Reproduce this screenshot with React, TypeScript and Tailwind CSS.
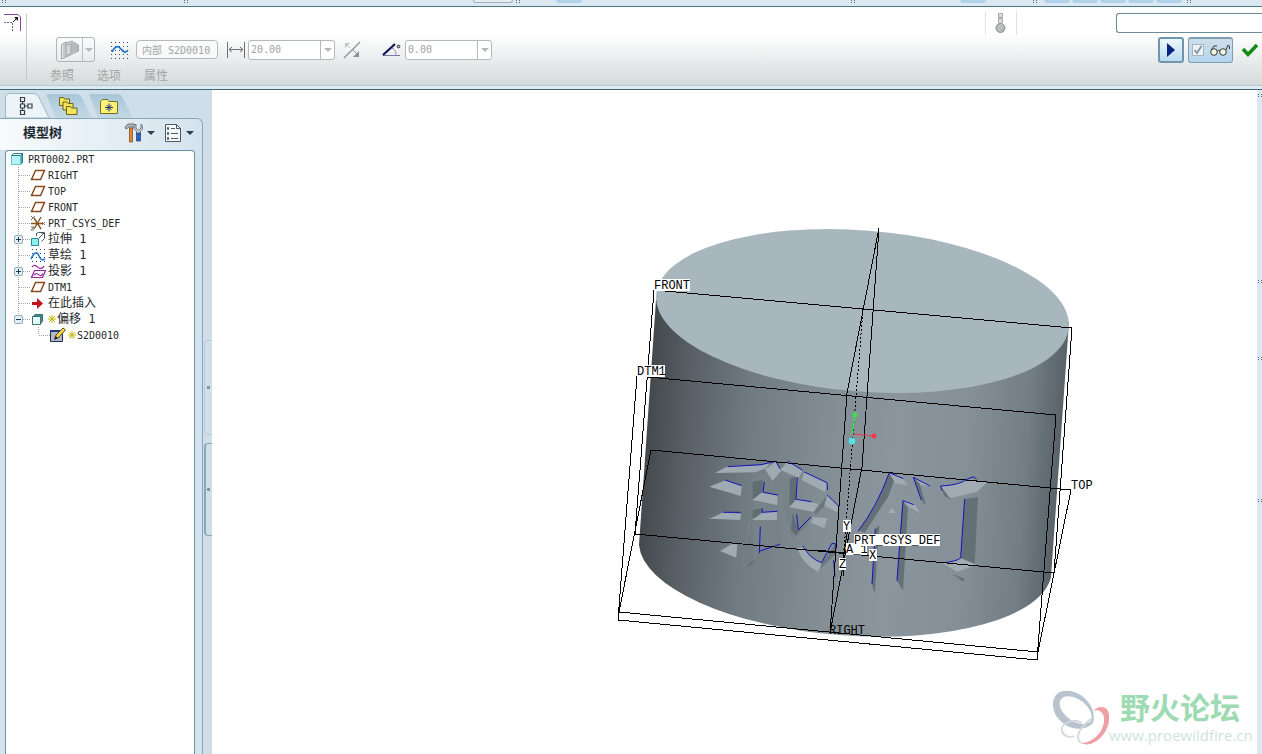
import { useState } from 'react';
import type { ReactNode } from 'react';

type IconName = 'part' | 'plane' | 'csys' | 'extrude' | 'sketch' | 'project' | 'insert' | 'offset' | 'section';

interface TreeNode {
  label: string;
  icon: IconName;
  depth: number;
  branch?: 'plus' | 'minus';
  last?: boolean;
  pending?: boolean;
}

const nodes: TreeNode[] = [
  { label: 'PRT0002.PRT', icon: 'part', depth: 0 },
  { label: 'RIGHT', icon: 'plane', depth: 1 },
  { label: 'TOP', icon: 'plane', depth: 1 },
  { label: 'FRONT', icon: 'plane', depth: 1 },
  { label: 'PRT_CSYS_DEF', icon: 'csys', depth: 1 },
  { label: '拉伸 1', icon: 'extrude', depth: 1, branch: 'plus' },
  { label: '草绘 1', icon: 'sketch', depth: 1 },
  { label: '投影 1', icon: 'project', depth: 1, branch: 'plus' },
  { label: 'DTM1', icon: 'plane', depth: 1 },
  { label: '在此插入', icon: 'insert', depth: 1 },
  { label: '偏移 1', icon: 'offset', depth: 1, branch: 'minus', last: true, pending: true },
  { label: 'S2D0010', icon: 'section', depth: 2, last: true, pending: true },
];

const icons: Record<IconName, ReactNode> = {
  part: (
    <g stroke="#2f7f87">
      <path d="M1.500 4.500L3.500 2.500h9v9l-2 2h-9z" fill="#3fa3ac" />
      <path d="M1.500 4.500h9v9h-9z" fill="#b4f3f6" stroke="#6cc4ca" />
      <path d="M1.500 4.500L3.500 2.500h9l-2 2z" fill="#e2ffff" />
    </g>
  ),
  plane: <path d="M5.500 3.500h9l-4 9h-9z" fill="#fff" stroke="#8a4a1c" strokeWidth="1.500" />,
  csys: (
    <g fill="none" stroke="#8a5220" strokeWidth="1.400">
      <path d="M1 8.500h12M4 3l7 11M11 2L4 14" />
      <path d="M1 1l2 2 2-2M3 3L1 5M12 7l3 3M15 7l-3 3M1 12h3l-3 3h3" stroke="#777" strokeWidth="1" />
    </g>
  ),
  extrude: (
    <g fill="none" stroke="#47585c">
      <path d="M1.500 7.500h7v7h-7z" fill="#8df0f0" stroke="#2b8a94" />
      <path d="M6.500 5V2.500l2-1h6v6l-3 3M9 7l5-5M11 2h3.500V6" />
    </g>
  ),
  sketch: (
    <g>
      <path d="M2 2.500h13M2 6.500h13M2 10.500h13M2 14.500h13" stroke="#26427c" strokeDasharray="1 3" />
      <path d="M1 12c3-7 6-8 8-3s4 4 6 3" fill="none" stroke="#1c78c8" strokeWidth="1.500" />
    </g>
  ),
  project: (
    <g fill="none" stroke="#93269d" strokeWidth="1.200">
      <path d="M2 4c3-4 5 0 7 1s4 0 5-2" />
      <path d="M4.500 7.500h11l-3 7h-11z" />
      <path d="M4 12.500c2-4 4-1 6 0s2-1 3-2" />
    </g>
  ),
  insert: <path d="M2 7h5V3l6 5.500L7 14v-4H2z" fill="#c8101c" />,
  offset: (
    <g stroke="#3d7774">
      <path d="M2.500 6L5 3.500h7.500v7L10 13.500z" fill="#388e86" />
      <path d="M2.500 5.500h8v8h-8z" fill="#e9fbf9" />
    </g>
  ),
  section: (
    <g>
      <path d="M.5 3.500h12v11H.5z" fill="#b4b8c4" stroke="#22305e" />
      <path d="M0 3h13v2H0z" fill="#1f3680" />
      <path d="M5 12l1-4 7-7 2.500 2L8 11z" fill="#f5d84c" stroke="#5a4610" />
      <path d="M4 13l1.500-4 2.500 2z" fill="#222" />
    </g>
  ),
};

const Glyph = ({ name }: { name: IconName }) => (
  <svg className="h-4 w-4 shrink-0" viewBox="0 0 16 16" aria-hidden="true">
    {icons[name]}
  </svg>
);

const Caret = ({ className = 'fill-[#2c3f4c]' }: { className?: string }) => (
  <svg className={`h-1 w-2 shrink-0 ${className}`} viewBox="0 0 8 4" aria-hidden="true">
    <path d="M0 0h8L4 4z" />
  </svg>
);

const Grip = () => (
  <svg className="h-1.5 w-1.5 shrink-0" viewBox="0 0 6 6" aria-hidden="true">
    <path d="M1 .5h4M1 2.500h4" stroke="#49718a" strokeDasharray="1 2" />
  </svg>
);

const TopStrip = () => (
  <div className="flex h-[7px] shrink-0 items-start overflow-hidden border-b border-[#4b7684] bg-[#dbe8f1]">
    <div className="flex w-[183px] pl-px"><Grip /></div>
    <div className="w-[290px]"><Grip /></div>
    <div className="h-[3px] w-10 rounded-b border border-t-0 border-[#9fb2bc] bg-[#e6eef2]"></div>
    <div className="w-[43px] pl-0.5"><Grip /></div>
    <div className="h-[3px] w-[26px] rounded-b bg-[#b1d2ea]"></div>
    <div className="flex flex-1 justify-end pr-[104px]"><Grip /></div>
    <div className="h-[3px] w-[26px] rounded-b bg-[#b1d2ea]"></div>
    <div className="flex w-[58px] justify-end pr-1.5"><Grip /></div>
    <div className="flex gap-0.5">
      {[0, 1, 2, 3, 4].map((i) => (
        <div key={i} className="h-[3px] w-[26px] rounded-b bg-[#b1d2ea]"></div>
      ))}
    </div>
    <div className="w-20 pl-1"><Grip /></div>
  </div>
);

interface ComboProps {
  label: string;
  value: string;
}

const Combo = ({ label, value }: ComboProps) => (
  <div className="flex h-5 w-[87px] overflow-hidden rounded-[3px] border border-[#b4babc] bg-white">
    <input aria-label={label} readOnly defaultValue={value} className="w-[71px] min-w-0 bg-transparent px-0.5 text-[10px] text-[#a0a4a6] outline-none" />
    <button aria-label={`${label} ▾`} className="flex flex-1 items-center justify-center border-l border-[#b4babc]">
      <Caret className="fill-[#b3b8ba]" />
    </button>
  </div>
);

const Dashboard = () => {
  const [preview, setPreview] = useState(true);

  return (
    <div className="flex h-[79px] shrink-0 border-b border-[#b3ccd5] bg-linear-to-b from-white from-35% to-[#d5dadb]">
      <div className="flex w-[27px] shrink-0 pt-[7px]">
        <svg className="h-[18px] w-[22px]" viewBox="0 0 22 18" fill="none" aria-label="offset">
          <path d="M4 .5h14l2.500 2.500V17" stroke="#8646a0" />
          <path d="M4 8.500h9M12.500 9v9" stroke="#8a5a9c" strokeDasharray="2 1" />
          <path d="M13 8l5-5" stroke="#111" />
          <path d="M14 3h4v4z" fill="#111" />
        </svg>
        <div className="ml-auto h-[66px] w-px bg-[#c3c9cb]"></div>
      </div>

      <div className="flex min-w-0 flex-1 flex-col">
        <div className="flex h-[30px] justify-end">
          <div className="mt-1 flex h-6 w-8 justify-center border-x border-[#dfe2e3]">
            <svg className="h-6 w-3" viewBox="0 0 12 24" aria-label="status">
              <path d="M3.500 2.500h4v4h-4zM3.500 7.500h4v4h-4z" fill="#ddd" stroke="#a5a8a9" />
              <path d="M3.500 11h4v4h-4z" fill="#ccc" />
              <circle cx="5.500" cy="17" r="4.500" fill="#b2b4b5" stroke="#8f9293" />
              <path d="M3 17l4-4M3 20l5-5" stroke="#d8d8d8" />
            </svg>
          </div>
          <input aria-label="message" className="mt-1.5 ml-[99px] h-5 w-[146px] rounded-l-[3px] border border-r-0 border-[#6d8b99] bg-white px-1 text-[10px] outline-none" />
        </div>

        <div className="flex h-[25px] items-center">
          <div className="ml-[29px] flex h-[25px] w-[39px] rounded-[3px] border border-[#b0b6b8]">
            <button aria-label="type" className="flex flex-1 items-center justify-center">
              <svg className="h-5 w-5" viewBox="0 0 20 20" fill="none" stroke="#a3a7a9" aria-hidden="true">
                <path d="M1.500 4.500L6 2v15l-4.500 2z" fill="#e7e9ea" />
                <path d="M6 3l6-2 6.500 4v6L12 14l-6 3z" fill="#d3d6d8" />
                <path d="M11 2l7 3v6l-7 2z" fill="#b5b9bb" stroke="none" />
                <path d="M6 5l5-1v10l-5 1M4 4v13" />
              </svg>
            </button>
            <button aria-label="type list" className="flex w-3 items-center justify-center border-l border-[#b9bfc1]">
              <Caret className="w-1.5 fill-[#b3b8ba]" />
            </button>
          </div>
          <svg className="ml-4 h-[18px] w-[18px]" viewBox="0 0 18 18" aria-hidden="true">
            <path d="M0 1.500h18M0 5.500h18M0 9.500h18M0 13.500h18M0 17.500h18" stroke="#354a80" strokeDasharray="1 3" />
            <path d="M1 11c3-6 6-7 9-3s5 4 7 1" fill="none" stroke="#1c74c4" strokeWidth="1.600" />
          </svg>
          <input aria-label="草绘" readOnly defaultValue="内部 S2D0010" className="ml-[7px] h-[19px] w-[82px] rounded border border-[#b4babc] bg-white/60 px-[5px] text-[10px] text-[#a0a4a6] outline-none" />
          <svg className="ml-[9px] h-4 w-[18px]" viewBox="0 0 18 16" stroke="#6c7072" fill="none" aria-hidden="true">
            <path d="M.5 0v16M17.500 0v16M2 7.500h14M5 5L2 7.500 5 10M13 5l3 2.500L13 10" />
          </svg>
          <div className="ml-[3px]"><Combo label="深度" value="20.00" /></div>
          <button aria-label="flip" className="ml-2">
            <svg className="h-[18px] w-[18px]" viewBox="0 0 18 18" stroke="#8d9193" fill="none">
              <path d="M1 17L17 1" strokeWidth="1.300" />
              <path d="M7 7L4 4" stroke="#c0c3c4" />
              <path d="M2 2h5L2 7z" fill="#c0c3c4" stroke="none" />
              <path d="M10 9l5 5" />
              <path d="M16 16h-6l6-6z" fill="#8d9193" stroke="none" />
            </svg>
          </button>
          <svg className="ml-5 h-4 w-5" viewBox="0 0 20 16" fill="none" aria-hidden="true">
            <path d="M2 13.500h17" stroke="#7779a5" />
            <path d="M2 13L14 2" stroke="#0c1250" strokeWidth="2.200" />
            <path d="M11 6c3 1 4 4 4 7" stroke="#7779a5" strokeDasharray="2 1" />
            <circle cx="17.500" cy="4.500" r="1.300" stroke="#111" />
          </svg>
          <div className="ml-1"><Combo label="角度" value="0.00" /></div>

          <div className="ml-auto flex items-center gap-1">
            <button aria-label="resume" className="flex h-[26px] w-[26px] items-center justify-center rounded-[3px] border-2 border-[#6f95a9] bg-linear-to-b from-[#eef7fc] to-[#b9dcf2]">
              <svg className="h-3.5 w-2" viewBox="0 0 8 14" aria-hidden="true"><path d="M0 0l8 7-8 7z" fill="#0a2280" /></svg>
            </button>
            <div className="flex h-[26px] w-[45px] items-center gap-1.5 rounded-[3px] border border-t-2 border-[#809db0] bg-linear-to-b from-[#cfdfea] to-[#b3d5ef] px-[3px]">
              <label className="relative flex h-3 w-3 shrink-0 items-center justify-center border border-[#a3b3bd] bg-[#f0f3f5]">
                <input type="checkbox" aria-label="preview" checked={preview} onChange={() => setPreview(!preview)} className="peer absolute inset-0 appearance-none" />
                <svg className="hidden h-2.5 w-2.5 peer-checked:block" viewBox="0 0 10 10" fill="none" stroke="#8690a0" strokeWidth="1.800" aria-hidden="true">
                  <path d="M1.500 5L4 8l4.500-7" />
                </svg>
              </label>
              <svg className="h-3 w-5 shrink-0" viewBox="0 0 20 12" stroke="#333b32" fill="#f4f5e6" aria-hidden="true">
                <circle cx="4" cy="8" r="3.300" />
                <circle cx="13" cy="8" r="3.300" />
                <path d="M7.300 7c1-1 2-1 2.500 0M1 6l3-4h3M16 6l2-5 1.500 1v3" fill="none" />
              </svg>
            </div>
            <button aria-label="apply" className="mr-[3px] ml-1">
              <svg className="h-4 w-[18px]" viewBox="0 0 18 16" fill="none" aria-hidden="true">
                <path d="M2 7l5 5.500L16 3" stroke="#128a16" strokeWidth="3.500" />
              </svg>
            </button>
          </div>
        </div>

        <div className="flex gap-[23px] pt-1.5 pl-[23px] text-xs text-[#a1a5a7]">
          <button>参照</button>
          <button>选项</button>
          <button>属性</button>
        </div>
      </div>
    </div>
  );
};

const NavTabs = () => (
  <div className="relative h-7 shrink-0">
    <svg className="absolute inset-0 h-7 w-[212px]" viewBox="0 0 212 28" aria-hidden="true">
      <defs>
        <linearGradient id="tab" x1="0" y1="0" x2="0" y2="1">
          <stop offset="0" stopColor="#a9c7d8" />
          <stop offset="1" stopColor="#c3d8e4" />
        </linearGradient>
      </defs>
      <path d="M89 4h28q5 0 7 6l9 18H98z" fill="url(#tab)" />
      <path d="M46 4h30q5 0 7 6l9 18H56z" fill="url(#tab)" />
      <path d="M5.500 28V7q0-3.500 3.500-3.500h24q5 0 7.500 7L49 28z" fill="#edf4f8" stroke="#9db8c6" />
    </svg>
    <div className="relative flex h-7 items-center pt-1 pl-[18px]">
      <button aria-label="模型树" className="w-[18px]">
        <svg className="h-5 w-[18px]" viewBox="0 0 18 20" fill="none" stroke="#333e49" strokeWidth="1.200">
          <path d="M2.500 1.500h4v4h-4zM2.500 8h4v4h-4zM2.500 14.500h4v4h-4zM10 8h4v4h-4zM4.500 5.500V8M4.500 12v2.500M6.500 10H10" />
        </svg>
      </button>
      <button aria-label="文件夹浏览器" className="ml-[22px] w-5">
        <svg className="h-5 w-5" viewBox="0 0 20 20" fill="#f4e45b" stroke="#6d631d">
          <path d="M1.500 9.500v-8h4l1 1.500h5v6.500z" />
          <path d="M5 14V6h4l1 1.500h5V14z" />
          <path d="M8.500 18.500v-8h4l1 1.500h5.500v6.500z" />
        </svg>
      </button>
      <button aria-label="收藏夹" className="ml-[22px] w-[18px]">
        <svg className="h-4 w-[18px]" viewBox="0 0 18 16">
          <path d="M.5 15.500v-12l2-2h5l1.500 2h8.500v12z" fill="#fbf17b" stroke="#75701f" />
          <path d="M9 5.500v8M5 9.500h8M6.500 7l5 5M11.500 7l-5 5" stroke="#26366e" />
        </svg>
      </button>
    </div>
  </div>
);

const TreeRow = ({ node }: { node: TreeNode }) => {
  const hasCjk = /[\u4e00-\u9fff]/.test(node.label);

  return (
    <li className="flex h-4 items-center">
      {node.depth === 2 && <span className="w-5 shrink-0"></span>}
      {node.depth > 0 && (
        <span className="relative h-4 w-6 shrink-0">
          <svg className="h-4 w-6" viewBox="0 0 24 16" stroke="#a2a2a2" strokeDasharray="1 1" aria-hidden="true">
            <path d={node.last ? 'M12.500 0v8' : 'M12.500 0v16'} />
            <path d="M13 8.500h11" />
          </svg>
          {node.branch && (
            <button aria-label={node.branch} className="absolute top-1 left-2 flex h-[9px] w-[9px] items-center justify-center rounded-xs border border-[#91acb9] bg-[#e4eff5]">
              <svg className="h-[5px] w-[5px]" viewBox="0 0 5 5" stroke="#1d3b4c">
                <path d={node.branch === 'plus' ? 'M0 2.500h5M2.500 0v5' : 'M0 2.500h5'} />
              </svg>
            </button>
          )}
        </span>
      )}
      {node.depth === 0 && <span className="w-1 shrink-0"></span>}
      <Glyph name={node.icon} />
      {node.pending && (
        <svg className="ml-0.5 h-2 w-2 shrink-0" viewBox="0 0 8 8" stroke="#c2b80c" aria-hidden="true">
          <path d="M4 0v8M0 4h8M1 1l6 6M7 1L1 7" />
        </svg>
      )}
      <span className={`whitespace-pre text-[#26292b] ${node.pending ? 'ml-px' : 'ml-0.5'} ${hasCjk ? 'text-xs leading-4' : 'pt-px text-[10px] leading-4'}`}>{node.label}</span>
    </li>
  );
};

const Navigator = () => (
  <aside className="flex w-[212px] shrink-0 flex-col bg-[#cfdfea]">
    <NavTabs />
    <div className="flex flex-1">
      <div className="flex w-[203px] flex-col rounded-tr-md border-t border-r border-[#8aa7b5] bg-[#d3e3ed]">
        <div className="flex h-[31px] items-center rounded-tr-md bg-linear-to-r from-[#f8fbfd] to-[#d3e3ed] pb-1 pl-[23px]">
          <h2 className="text-[13px] font-bold text-[#1d2830]">模型树</h2>
          <button aria-label="设置" className="ml-[62px] flex items-center gap-1">
            <svg className="h-5 w-[19px]" viewBox="0 0 19 20" aria-hidden="true">
              <path d="M1 4l3-3h6l2 3-2 1-1-1H5L2 6z" fill="#b9bec2" stroke="#3d4549" strokeWidth=".7" />
              <path d="M5.500 5h3v14h-3z" fill="#e1862d" stroke="#74421a" strokeWidth=".7" />
              <path d="M12 1v4l2 2h1l2-2V1l1.500 2v3L16.500 8v3h-4V8L10 6V3z" fill="#c7ced3" stroke="#4d5960" strokeWidth=".7" />
              <path d="M12.500 10h4v8h-4z" fill="#2e66ba" stroke="#1d3b74" strokeWidth=".7" />
            </svg>
            <Caret />
          </button>
          <button aria-label="显示" className="ml-2.5 flex items-center gap-1">
            <svg className="h-5 w-[17px]" viewBox="0 0 17 20" fill="none" stroke="#4c5b64" aria-hidden="true">
              <path d="M.5 1.500h11l4 4v13H.5z" fill="#f5f8fa" />
              <path d="M11.500 1.500v4h4" />
              <path d="M6 5.500h4M6 10.500h7M6 15.500h7" />
              <path d="M2.500 4.500h1v2h-1zM2.500 9.500h1v2h-1zM2.500 14.500h1v2h-1z" />
            </svg>
            <Caret />
          </button>
        </div>
        <ul className="mr-[7px] ml-[5px] flex-1 rounded-t border border-b-0 border-[#6b909f] bg-white">
          {nodes.map((node) => (
            <TreeRow key={node.label} node={node} />
          ))}
        </ul>
      </div>
      <div className="flex flex-1 flex-col pt-[222px] pl-px">
        <div className="flex h-[95px] items-center justify-center rounded-l border border-r-0 border-[#b9cdd9]">
          <span className="h-[3px] w-[3px] rounded-full border border-[#334b59]"></span>
        </div>
        <div className="mt-2 flex h-[93px] items-center justify-center rounded-l border border-r-0 border-l-2 border-[#8ea6b4] pr-0.5">
          <span className="h-[3px] w-[3px] rounded-full border border-[#334b59]"></span>
        </div>
      </div>
    </div>
  </aside>
);

/* Carved strokes of the first character: light floors, dark walls, blue sketch edges */
const CarvedLeft = () => (
  <g transform="translate(600 430) scale(.3333)">
    <path d="M455 150l30-25 55 15-5 60-75 10zM457 215l75 8v38l-75 5zM457 270h75l10 80-60 20-45 42-10-5 20-140zM535 150l35-10v90l70 10-20 50-45 35zM455 155v110l-30 125 15 20 20-15V155z" fill="#788289" />
    <path d="M570 145l18-5v75l-20 12zM573 300l5-55 15 55 35-35-40 52zM437 412l25-22-5 14zM458 155l30-5v38l-30 22zM458 240l28-5v18l-28 12z" fill="#626c73" />
    <g fill="#9faab2">
      <path d="M345 129l38-20 105-4 27-10-18 20-30 12z" />
      <path d="M495 118l32-23 16 28-25 30z" />
      <path d="M541 120l24-27 43 28-12 22z" />
      <path d="M605 150l8-24 70 32-8 28z" />
      <path d="M328 170l50-20 48 17-4 31z" />
      <path d="M457 210l30-24 45 11v28z" />
      <path d="M568 232l22-26 66 16-14 24z" />
      <path d="M328 266l43-19 52 4-2 19z" />
      <path d="M457 270l32-24h42v24z" />
      <path d="M670 225l12-30 36 35-5 18z" />
      <path d="M632 278l8-17 42 4-9 30z" />
      <path d="M360 363l36-22 16 2-3 40z" />
      <path d="M592 355l20-5 20 30 33 18-10 28q-48-24-63-71z" />
    </g>
    <path d="M642 246l40-51-10 35-25 24zM665 398l43-58v30l-45 45z" fill="#6c767d" />
    <g fill="none" stroke="#1414b8" strokeWidth="3">
      <path d="M383 110l100-6 45-10 12 22" />
      <path d="M563 93l45 28M613 126l68 32 2 22M375 150l50 17M493 155l-4 32 45 8M592 142l-4 66 46 7M370 247h52M487 235v12l45-3M682 195l36 35M590 253l5 46 38-38M481 290l-3 80M480 363l60-20M609 348q20 38 56 50l30-57h12v28M701 390l4 52" />
    </g>
  </g>
);

/* Second character */
const CarvedRight = () => (
  <g transform="translate(840 430) scale(.3333)">
    <g fill="#656f76">
      <path d="M148 128l14 24-18 48-70 108-18-8 50-72z" />
      <path d="M220 142l18 16 19 66-8-6z" />
      <path d="M187 213l17 20-15 250-18-32z" />
      <path d="M106 298l12-12-14 206-8-30z" />
      <path d="M374 207l40-6-10 206-42-20z" />
      <path d="M300 168l22 10 12 32-20-12zM338 432l35 14-2 10z" />
    </g>
    <g fill="#a0abb3">
      <path d="M150 132l40 14 12 20-36-6z" />
      <path d="M222 142l50 26-28-2z" />
      <path d="M190 212l32 8 19 30-35-20z" />
      <path d="M302 168q50-2 88-20l50 10-30 28-80 19z" />
      <path d="M302 397q48 2 60-13l48 20-58 22zM155 233l13 16h-24z" />
    </g>
    <g fill="none" stroke="#1414b8" strokeWidth="3">
      <path d="M54 304q58-76 94-176l42 18M106 296l-10 166M222 224l-33-12-18 240M244 210l-24-68 50 26M306 182l-4-14q54-2 78-20l22-8 8 8M374 207l-12 177q-12 10-50 14" />
    </g>
  </g>
);

interface LabelProps {
  x: number;
  y: number;
  text: string;
  width: number;
}

const PlaneLabel = ({ x, y, text, width }: LabelProps) => (
  <g>
    <rect x={x} y={y - 10} width={width} height="12" fill="#fff" />
    <text x={x} y={y} fontSize="12" fill="#000">{text}</text>
  </g>
);

const Viewport = () => (
  <main className="min-w-0 flex-1 bg-white">
    <svg className="block h-full w-full" viewBox="212 90 1045 664" preserveAspectRatio="xMinYMin meet" fontFamily='"Liberation Mono", monospace'>
      <defs>
        <linearGradient id="body" gradientUnits="userSpaceOnUse" x1="677" y1="0" x2="1091" y2="0" gradientTransform="skewX(-4)">
          <stop offset="0" stopColor="#44494d" />
          <stop offset=".1" stopColor="#596167" />
          <stop offset=".25" stopColor="#717b82" />
          <stop offset=".45" stopColor="#838e95" />
          <stop offset=".6" stopColor="#8a959d" />
          <stop offset=".78" stopColor="#848f97" />
          <stop offset=".92" stopColor="#727d84" />
          <stop offset="1" stopColor="#596369" />
        </linearGradient>
      </defs>

      <path d="M656 300L639 545A207 79 4.500 0 0 1051 577L1069 322z" fill="url(#body)" />
      <ellipse cx="862.500" cy="311" rx="207" ry="80.600" transform="rotate(4.500 862.500 311)" fill="#a8b6be" />
      <CarvedLeft />
      <CarvedRight />

      <g fill="none" stroke="#000" shapeRendering="crispEdges">
        <path d="M654 290L1072 328L1054 573L635 534z" />
        <path d="M637 376L1056 415L1037 660L618 620z" />
        <path d="M651 450L1071 490L1038 652L619 612z" />
        <path d="M879 228L847 393L830 633L862 467z" />
        <path d="M863 309L843 562" strokeDasharray="2 2" />
        <path d="M816 550L873 556M844 553L843 577M844 553L848 528" />
      </g>

      <path d="M855 415L852 434" stroke="#3be04a" strokeWidth="1.500" />
      <path d="M853 434L874 436" stroke="#e8404e" />
      <circle cx="855" cy="415" r="2.500" fill="#3be04a" />
      <circle cx="874" cy="436" r="2.500" fill="#f03c4c" />
      <circle cx="852" cy="441" r="3.300" fill="#4fe6e6" />

      <PlaneLabel x={654} y={289} text="FRONT" width={36} />
      <PlaneLabel x={637} y={375} text="DTM1" width={28} />
      <text x="1071" y="489" fontSize="12">TOP</text>
      <text x="829" y="634" fontSize="12">RIGHT</text>
      <PlaneLabel x={843} y={530} text="Y" width={8} />
      <PlaneLabel x={839} y={568} text="Z" width={7} />
      <PlaneLabel x={846} y={553} text="A_1" width={21} />
      <PlaneLabel x={869} y={559} text="X" width={8} />
      <PlaneLabel x={854} y={544} text="PRT_CSYS_DEF" width={86} />

      <g>
        <path fillRule="evenodd" d="M1093 723C1097 711 1087 694 1070 691C1053 689 1049 704 1057 717C1065 728 1082 734 1093 723ZM1091 721C1084 728 1069 722 1062 711C1056 701 1062 694 1073 697C1085 701 1094 711 1091 721Z" fill="#b8c3cd" />
        <path d="M1093 711C1100 704 1111 706 1109 720C1108 735 1092 749 1081 743C1094 743 1105 730 1104 718C1103 711 1098 709 1093 711Z" fill="#eda1a7" />
        <path d="M1082 723C1071 717 1060 725 1062 731C1063 736 1069 738 1074 736M1081 743C1074 737 1080 727 1092 718" fill="none" stroke="#d3d8df" strokeWidth="1.800" />
        <text x="1120" y="719" fontSize="30" fontWeight="700" fill="#9edbb2" fontFamily='"Noto Sans CJK SC", sans-serif'>野火论坛</text>
        <text x="1109" y="741" fontSize="15" fill="#cfe3dc" fontFamily='"Open Sans", sans-serif'>www.proewildfire.cn</text>
      </g>
    </svg>
  </main>
);

const RightStrip = () => (
  <div className="flex w-[5px] shrink-0 flex-col overflow-hidden bg-[#dbe8f1] pt-1">
    <div className="h-[186px]"><Grip /></div>
    <div className="h-[77px]"><Grip /></div>
    <div className="h-[142px]"><Grip /></div>
    <div><Grip /></div>
  </div>
);

export default function App() {
  return (
    <div className="flex h-screen flex-col overflow-hidden bg-white font-['DejaVu_Sans_Mono','Noto_Sans_CJK_SC',monospace]">
      <TopStrip />
      <Dashboard />
      <div className="h-1 shrink-0 border-b border-[#426778] bg-[#deebf1]"></div>
      <div className="flex min-h-0 flex-1">
        <Navigator />
        <Viewport />
        <RightStrip />
      </div>
    </div>
  );
}
